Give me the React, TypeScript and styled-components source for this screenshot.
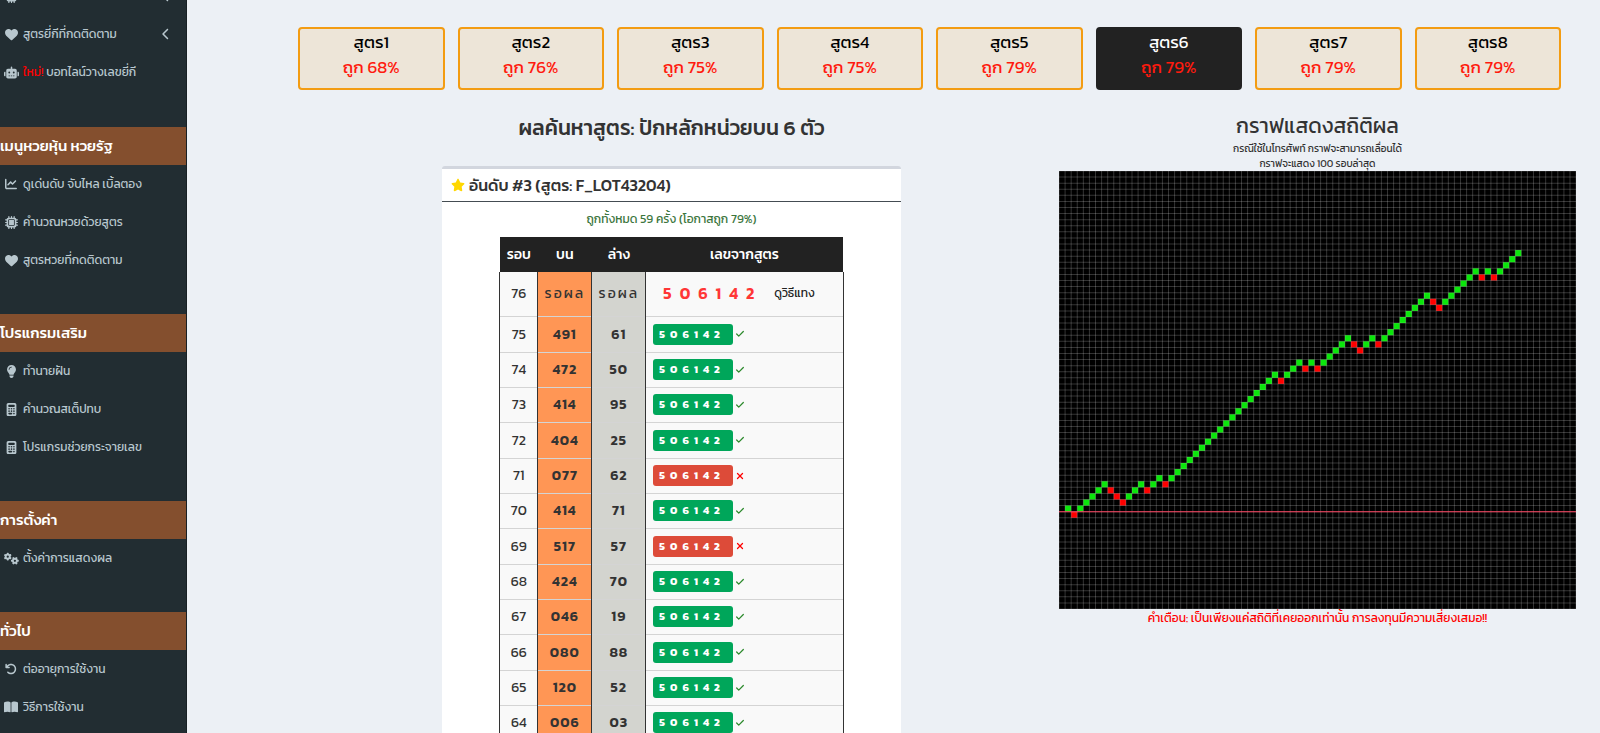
import React from "react";
import styled, { createGlobalStyle } from "styled-components";
import {
  FaHeart,
  FaRobot,
  FaChartLine,
  FaMicrochip,
  FaLightbulb,
  FaCalculator,
  FaGears,
  FaArrowRotateLeft,
  FaBookOpen,
  FaChevronLeft,
  FaStar,
} from "react-icons/fa6";
import { Check, X } from "lucide-react";

const GlobalStyle = createGlobalStyle`
  *, *::before, *::after { box-sizing: border-box; }
  body {
    margin: 0;
    background: #ecf0f5;
    color: #333;
    font-family: Kanit, Prompt, "Noto Sans Thai", "Noto Sans", sans-serif;
    font-size: 14px;
  }
`;

const Page = styled.div`
  display: flex;
  height: 100vh;
  overflow: hidden;
`;

const Sidebar = styled.nav`
  flex: 0 0 187px;
  background: #222d32;
  border-right: 1px solid #182024;
  overflow: hidden;
`;

const MenuSection = styled.section`
  margin-bottom: 35px;
  &:first-child {
    margin-top: -23px;
    margin-bottom: 36px;
  }
`;

const SectionTitle = styled.h2`
  margin: 0;
  height: 38px;
  line-height: 38px;
  background: #844f2e;
  color: #fff;
  font-size: 15px;
  font-weight: 500;
  white-space: nowrap;
`;

const MenuList = styled.ul`
  margin: 0;
  padding: 0;
  list-style: none;
`;

const MenuLink = styled.a`
  display: flex;
  align-items: center;
  gap: 4px;
  height: 38px;
  padding: 0 14px 0 3px;
  color: #b8c7ce;
  font-size: 12px;
  text-decoration: none;
  white-space: nowrap;
`;

const MenuIcon = styled.span`
  display: flex;
  flex: 0 0 16px;
  justify-content: center;
`;

const MenuText = styled.span`
  flex: 1;
`;

const NewTag = styled.span`
  color: #f00;
`;

const Main = styled.main`
  flex: 1;
  min-width: 0;
  padding: 27px 24px 0 111px;
`;

const FormulaBar = styled.div`
  display: grid;
  grid-template-columns: repeat(8, 1fr);
  gap: 13px;
  margin-right: 15px;
`;

const FormulaButton = styled.button<{ $active?: boolean }>`
  height: 63px;
  padding: 0 0 8px;
  border: 2px solid ${(p) => (p.$active ? "#222" : "#f39c12")};
  border-radius: 4px;
  background: ${(p) => (p.$active ? "#222" : "#ede5d8")};
  color: ${(p) => (p.$active ? "#fff" : "#000")};
  font-family: inherit;
  font-size: 17px;
  line-height: 25px;
  cursor: pointer;
`;

const Rate = styled.span`
  display: block;
  color: #ff1a0e;
`;

const Columns = styled.div`
  display: grid;
  grid-template-columns: 13fr 9fr;
  gap: 14px;
  margin-top: 20px;
`;

const Column = styled.section`
  display: flex;
  flex-direction: column;
  align-items: center;
  min-width: 0;
`;

const ResultTitle = styled.h1`
  margin: 0 0 20px;
  font-size: 21px;
  font-weight: 500;
  line-height: 36px;
`;

const Card = styled.article`
  width: 100%;
  max-width: 459px;
  border-top: 3px solid #d2d6de;
  border-radius: 3px;
  background: #fff;
`;

const CardHeader = styled.header`
  display: flex;
  align-items: center;
  gap: 4px;
  height: 33px;
  padding: 0 9px;
  border-bottom: 1px solid #444c52;
`;

const CardTitle = styled.h3`
  margin: 0;
  font-size: 16px;
  font-weight: 500;
  line-height: 24px;
`;

const Summary = styled.p`
  margin: 0;
  color: #3c763d;
  font-size: 12px;
  line-height: 35px;
  text-align: center;
`;

const ResultTable = styled.table`
  width: 75%;
  margin: 0 auto;
  table-layout: fixed;
  border-collapse: collapse;
  font-size: 14px;
  text-align: center;
`;

const HeadCell = styled.th<{ $width?: number }>`
  width: ${(p) => (p.$width ? `${p.$width}px` : "auto")};
  height: 35px;
  padding: 0;
  background: #222;
  color: #fff;
  font-weight: 500;
`;

const BodyRow = styled.tr<{ $pending?: boolean }>`
  height: ${(p) => (p.$pending ? 44 : 35)}px;
  border-bottom: 1px solid #d4d4d4;
  &:nth-child(3n + 2) { height: 36px; }
`;

const Cell = styled.td<{ $tone?: "top" | "bottom"; $strong?: boolean }>`
  padding: 0;
  border-left: 1px solid #333;
  border-right: 1px solid #333;
  background: ${(p) =>
    p.$tone === "top" ? "#ff9655" : p.$tone === "bottom" ? "#d3d4cf" : "#f9f9f9"};
  font-weight: ${(p) => (p.$strong ? 600 : 400)};
  letter-spacing: ${(p) => (!p.$tone ? "normal" : p.$strong ? "1px" : "2px")};
  white-space: nowrap;
`;

const Picks = styled.div`
  display: flex;
  align-items: center;
  gap: 2px;
  padding-left: 7px;
`;

const Badge = styled.span<{ $hit: boolean }>`
  width: 80px;
  padding-left: 6px;
  border-radius: 3px;
  background: ${(p) => (p.$hit ? "#00a65a" : "#dd4b39")};
  color: #fff;
  font-size: 11px;
  font-weight: 700;
  line-height: 21px;
  letter-spacing: 5px;
  text-align: left;
`;

const NextPicks = styled.div`
  display: flex;
  align-items: center;
  gap: 12px;
  padding: 0 0 2px 17px;
`;

const NextNumber = styled.span`
  color: #ff3636;
  font-size: 16px;
  font-weight: 600;
  letter-spacing: 8px;
`;

const HowTo = styled.a`
  color: #222;
  font-size: 12px;
  text-decoration: none;
`;

const ChartTitle = styled.h2`
  margin: 0;
  font-size: 21px;
  font-weight: 400;
  line-height: 31px;
`;

const ChartNote = styled.p`
  margin: 0;
  font-size: 10px;
  line-height: 15px;
`;

const Chart = styled.svg`
  display: block;
  width: 100%;
  background: #000;
`;

const Warning = styled.p`
  margin: 0;
  color: #f00;
  font-size: 12px;
  line-height: 18px;
`;

type Item = { icon: React.ReactNode; label: string; isNew?: boolean; expandable?: boolean };

const sections: { title?: string; items: Item[] }[] = [
  {
    items: [
      { icon: <FaMicrochip size={13} />, label: "", expandable: true },
      { icon: <FaHeart size={13} />, label: "สูตรยี่กีที่กดติดตาม", expandable: true },
      { icon: <FaRobot size={15} />, label: "บอทไลน์วางเลขยี่กี", isNew: true },
    ],
  },
  {
    title: "เมนูหวยหุ้น หวยรัฐ",
    items: [
      { icon: <FaChartLine size={12} />, label: "ดูเด่นดับ จับไหล เบิ้ลตอง" },
      { icon: <FaMicrochip size={13} />, label: "คำนวณหวยด้วยสูตร" },
      { icon: <FaHeart size={13} />, label: "สูตรหวยที่กดติดตาม" },
    ],
  },
  {
    title: "โปรแกรมเสริม",
    items: [
      { icon: <FaLightbulb size={13} />, label: "ทำนายฝัน" },
      { icon: <FaCalculator size={13} />, label: "คำนวณสเต็ปทบ" },
      { icon: <FaCalculator size={13} />, label: "โปรแกรมช่วยกระจายเลข" },
    ],
  },
  {
    title: "การตั้งค่า",
    items: [{ icon: <FaGears size={15} />, label: "ตั้งค่าการแสดงผล" }],
  },
  {
    title: "ทั่วไป",
    items: [
      { icon: <FaArrowRotateLeft size={12} />, label: "ต่ออายุการใช้งาน" },
      { icon: <FaBookOpen size={14} />, label: "วิธีการใช้งาน" },
    ],
  },
];

const rates = [68, 76, 75, 75, 79, 79, 79, 79];

const rows: [number, string, string, boolean][] = [
  [75, "491", "61", true],
  [74, "472", "50", true],
  [73, "414", "95", true],
  [72, "404", "25", true],
  [71, "077", "62", false],
  [70, "414", "71", true],
  [69, "517", "57", false],
  [68, "424", "70", true],
  [67, "046", "19", true],
  [66, "080", "88", true],
  [65, "120", "52", true],
  [64, "006", "03", true],
];

/* One letter per round: W moves the line up a cell, L moves it down. */
const history =
  "WLWWWWWLLLWWWLWWL" +
  "W".repeat(18) +
  "LWWWLWLWWWWWLLWWL" +
  "W".repeat(8) +
  "LLWWWWWWLWLWWWW";

const COLS = 85;
const ROWS = 72;
const BASE = 56;

function HistoryChart() {
  let level = BASE;
  const cells = history.split("").map((result, i) => {
    level += result === "W" ? -1 : 1;
    return { x: i + 1, y: level, win: result === "W" };
  });
  return (
    <Chart viewBox={`0 0 ${COLS * 6} ${ROWS * 6}`} role="img" aria-label="กราฟแสดงสถิติผล">
      {cells.map((c) => (
        <rect
          key={c.x}
          x={c.x * 6}
          y={c.y * 6}
          width={6}
          height={6}
          fill={c.win ? "#0be60b" : "#f00"}
        />
      ))}
      <g stroke="#fff" strokeOpacity={0.2} strokeWidth={1}>
        {Array.from({ length: COLS + 1 }, (_, i) => (
          <line key={`v${i}`} x1={i * 6} x2={i * 6} y1={0} y2={ROWS * 6} />
        ))}
        {Array.from({ length: ROWS + 1 }, (_, i) => (
          <line key={`h${i}`} x1={0} x2={COLS * 6} y1={i * 6} y2={i * 6} />
        ))}
      </g>
      <line x1={0} x2={COLS * 6} y1={BASE * 6} y2={BASE * 6} stroke="#ff4462" strokeWidth={1} />
    </Chart>
  );
}

export default function App() {
  return (
    <>
      <GlobalStyle />
      <Page>
        <Sidebar>
          {sections.map((section, i) => (
            <MenuSection key={i}>
              {section.title && <SectionTitle>{section.title}</SectionTitle>}
              <MenuList>
                {section.items.map((item) => (
                  <li key={item.label}>
                    <MenuLink href="#">
                      <MenuIcon>{item.icon}</MenuIcon>
                      <MenuText>
                        {item.isNew && <NewTag>ใหม่! </NewTag>}
                        {item.label}
                      </MenuText>
                      {item.expandable && <FaChevronLeft size={12} />}
                    </MenuLink>
                  </li>
                ))}
              </MenuList>
            </MenuSection>
          ))}
        </Sidebar>
        <Main>
          <FormulaBar>
            {rates.map((rate, i) => (
              <FormulaButton key={i} type="button" $active={i === 5}>
                สูตร{i + 1}
                <Rate>ถูก {rate}%</Rate>
              </FormulaButton>
            ))}
          </FormulaBar>
          <Columns>
            <Column>
              <ResultTitle>ผลค้นหาสูตร: ปักหลักหน่วยบน 6 ตัว</ResultTitle>
              <Card>
                <CardHeader>
                  <FaStar size={14} color="#ffd700" />
                  <CardTitle>อันดับ #3 (สูตร: F_LOT43204)</CardTitle>
                </CardHeader>
                <Summary>ถูกทั้งหมด 59 ครั้ง (โอกาสถูก 79%)</Summary>
                <ResultTable>
                  <thead>
                    <tr>
                      <HeadCell $width={38}>รอบ</HeadCell>
                      <HeadCell $width={54}>บน</HeadCell>
                      <HeadCell $width={54}>ล่าง</HeadCell>
                      <HeadCell>เลขจากสูตร</HeadCell>
                    </tr>
                  </thead>
                  <tbody>
                    <BodyRow $pending>
                      <Cell>76</Cell>
                      <Cell $tone="top">รอผล</Cell>
                      <Cell $tone="bottom">รอผล</Cell>
                      <Cell>
                        <NextPicks>
                          <NextNumber>506142</NextNumber>
                          <HowTo href="#">ดูวิธีแทง</HowTo>
                        </NextPicks>
                      </Cell>
                    </BodyRow>
                    {rows.map(([round, top, bottom, hit]) => (
                      <BodyRow key={round}>
                        <Cell>{round}</Cell>
                        <Cell $tone="top" $strong>{top}</Cell>
                        <Cell $tone="bottom" $strong>{bottom}</Cell>
                        <Cell>
                          <Picks>
                            <Badge $hit={hit}>506142</Badge>
                            {hit ? (
                              <Check size={10} strokeWidth={3} color="#2c8a2c" />
                            ) : (
                              <X size={10} strokeWidth={3} color="#f00" />
                            )}
                          </Picks>
                        </Cell>
                      </BodyRow>
                    ))}
                  </tbody>
                </ResultTable>
              </Card>
            </Column>
            <Column>
              <ChartTitle>กราฟแสดงสถิติผล</ChartTitle>
              <ChartNote>กรณีใช้ในโทรศัพท์ กราฟจะสามารถเลื่อนได้</ChartNote>
              <ChartNote>กราฟจะแสดง 100 รอบล่าสุด</ChartNote>
              <HistoryChart />
              <Warning>คำเตือน: เป็นเพียงแค่สถิติที่เคยออกเท่านั้น การลงทุนมีความเสี่ยงเสมอ!!</Warning>
            </Column>
          </Columns>
        </Main>
      </Page>
    </>
  );
}
